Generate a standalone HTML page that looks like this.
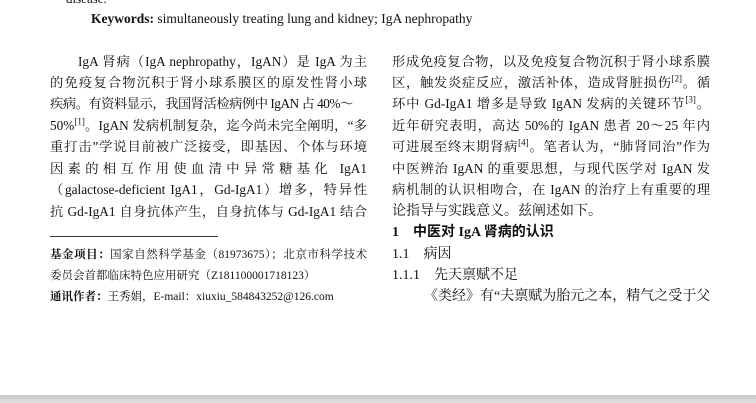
<!DOCTYPE html>
<html><head><meta charset="utf-8"><style>
body{margin:0;width:756px;height:403px;overflow:hidden;background:#fff;position:relative;font-family:"Liberation Serif","Noto Serif CJK SC",serif;color:#111}
.l{position:absolute;height:22px;line-height:22px;font-size:14px;white-space:nowrap}
.j{text-align:justify;text-align-last:justify;white-space:normal;overflow:visible;font-size:13.3px}
.L{left:50px;width:317px}
.R{left:392px;width:318px}
.f{font-size:11.5px;left:50px;width:317px}
sup{font-size:9px;line-height:0}
.b{font-weight:bold}
.bar{position:absolute;left:0;top:395px;width:756px;height:8px;background:linear-gradient(#c8c8c8,#e2e2e2)}
</style></head><body>
<div class="l" style="left:66px;top:-12px;font-size:13px">disease.</div>
<div class="l" style="left:91px;top:8px;font-size:13.5px"><b>Keywords:</b> simultaneously treating lung and kidney; IgA nephropathy</div>

<div class="l j L" style="top:51px;left:78px;width:289px">IgA 肾病（IgA nephropathy，IgAN）是 IgA 为主</div>
<div class="l j L" style="top:72px">的免疫复合物沉积于肾小球系膜区的原发性肾小球</div>
<div class="l L" style="top:93px;font-size:13.3px;letter-spacing:-0.5px">疾病。有资料显示，我国肾活检病例中 IgAN 占 40%～</div>
<div class="l j L" style="top:115px">50%<sup>[1]</sup>。IgAN 发病机制复杂，迄今尚未完全阐明，“多</div>
<div class="l j L" style="top:136px">重打击”学说目前被广泛接受，即基因、个体与环境</div>
<div class="l j L" style="top:158px">因素的相互作用使血清中异常糖基化 IgA1</div>
<div class="l j L" style="top:179px">（galactose-deficient IgA1，Gd-IgA1）增多，特异性</div>
<div class="l j L" style="top:201px">抗 Gd-IgA1 自身抗体产生，自身抗体与 Gd-IgA1 结合</div>

<div style="position:absolute;left:50px;top:236px;width:168px;height:1px;background:#333"></div>
<div class="l j f" style="top:244px;font-size:11.5px"><b>基金项目：</b>国家自然科学基金（81973675）；北京市科学技术</div>
<div class="l f" style="top:265px">委员会首都临床特色应用研究（Z181100001718123）</div>
<div class="l f" style="top:286px"><b>通讯作者：</b>王秀娟，E-mail：xiuxiu_584843252@126.com</div>

<div class="l j R" style="top:51px">形成免疫复合物，以及免疫复合物沉积于肾小球系膜</div>
<div class="l j R" style="top:72px">区，触发炎症反应，激活补体，造成肾脏损伤<sup>[2]</sup>。循</div>
<div class="l j R" style="top:93px">环中 Gd-IgA1 增多是导致 IgAN 发病的关键环节<sup>[3]</sup>。</div>
<div class="l j R" style="top:115px">近年研究表明，高达 50%的 IgAN 患者 20～25 年内</div>
<div class="l j R" style="top:136px">可进展至终末期肾病<sup>[4]</sup>。笔者认为，“肺肾同治”作为</div>
<div class="l j R" style="top:158px">中医辨治 IgAN 的重要思想，与现代医学对 IgAN 发</div>
<div class="l j R" style="top:179px">病机制的认识相吻合，在 IgAN 的治疗上有重要的理</div>
<div class="l R" style="top:201px">论指导与实践意义。兹阐述如下。</div>
<div class="l R b" style="top:222px;font-family:'Liberation Serif','Noto Sans CJK SC',sans-serif">1&nbsp;&nbsp;&nbsp;&nbsp;中医对 IgA 肾病的认识</div>
<div class="l R" style="top:244px">1.1&nbsp;&nbsp;&nbsp;&nbsp;病因</div>
<div class="l R" style="top:265px">1.1.1&nbsp;&nbsp;&nbsp;&nbsp;先天禀赋不足</div>
<div class="l R" style="top:286px;left:424px;width:286px">《类经》有“夫禀赋为胎元之本，精气之受于父</div>

<div class="bar"></div>
</body></html>
